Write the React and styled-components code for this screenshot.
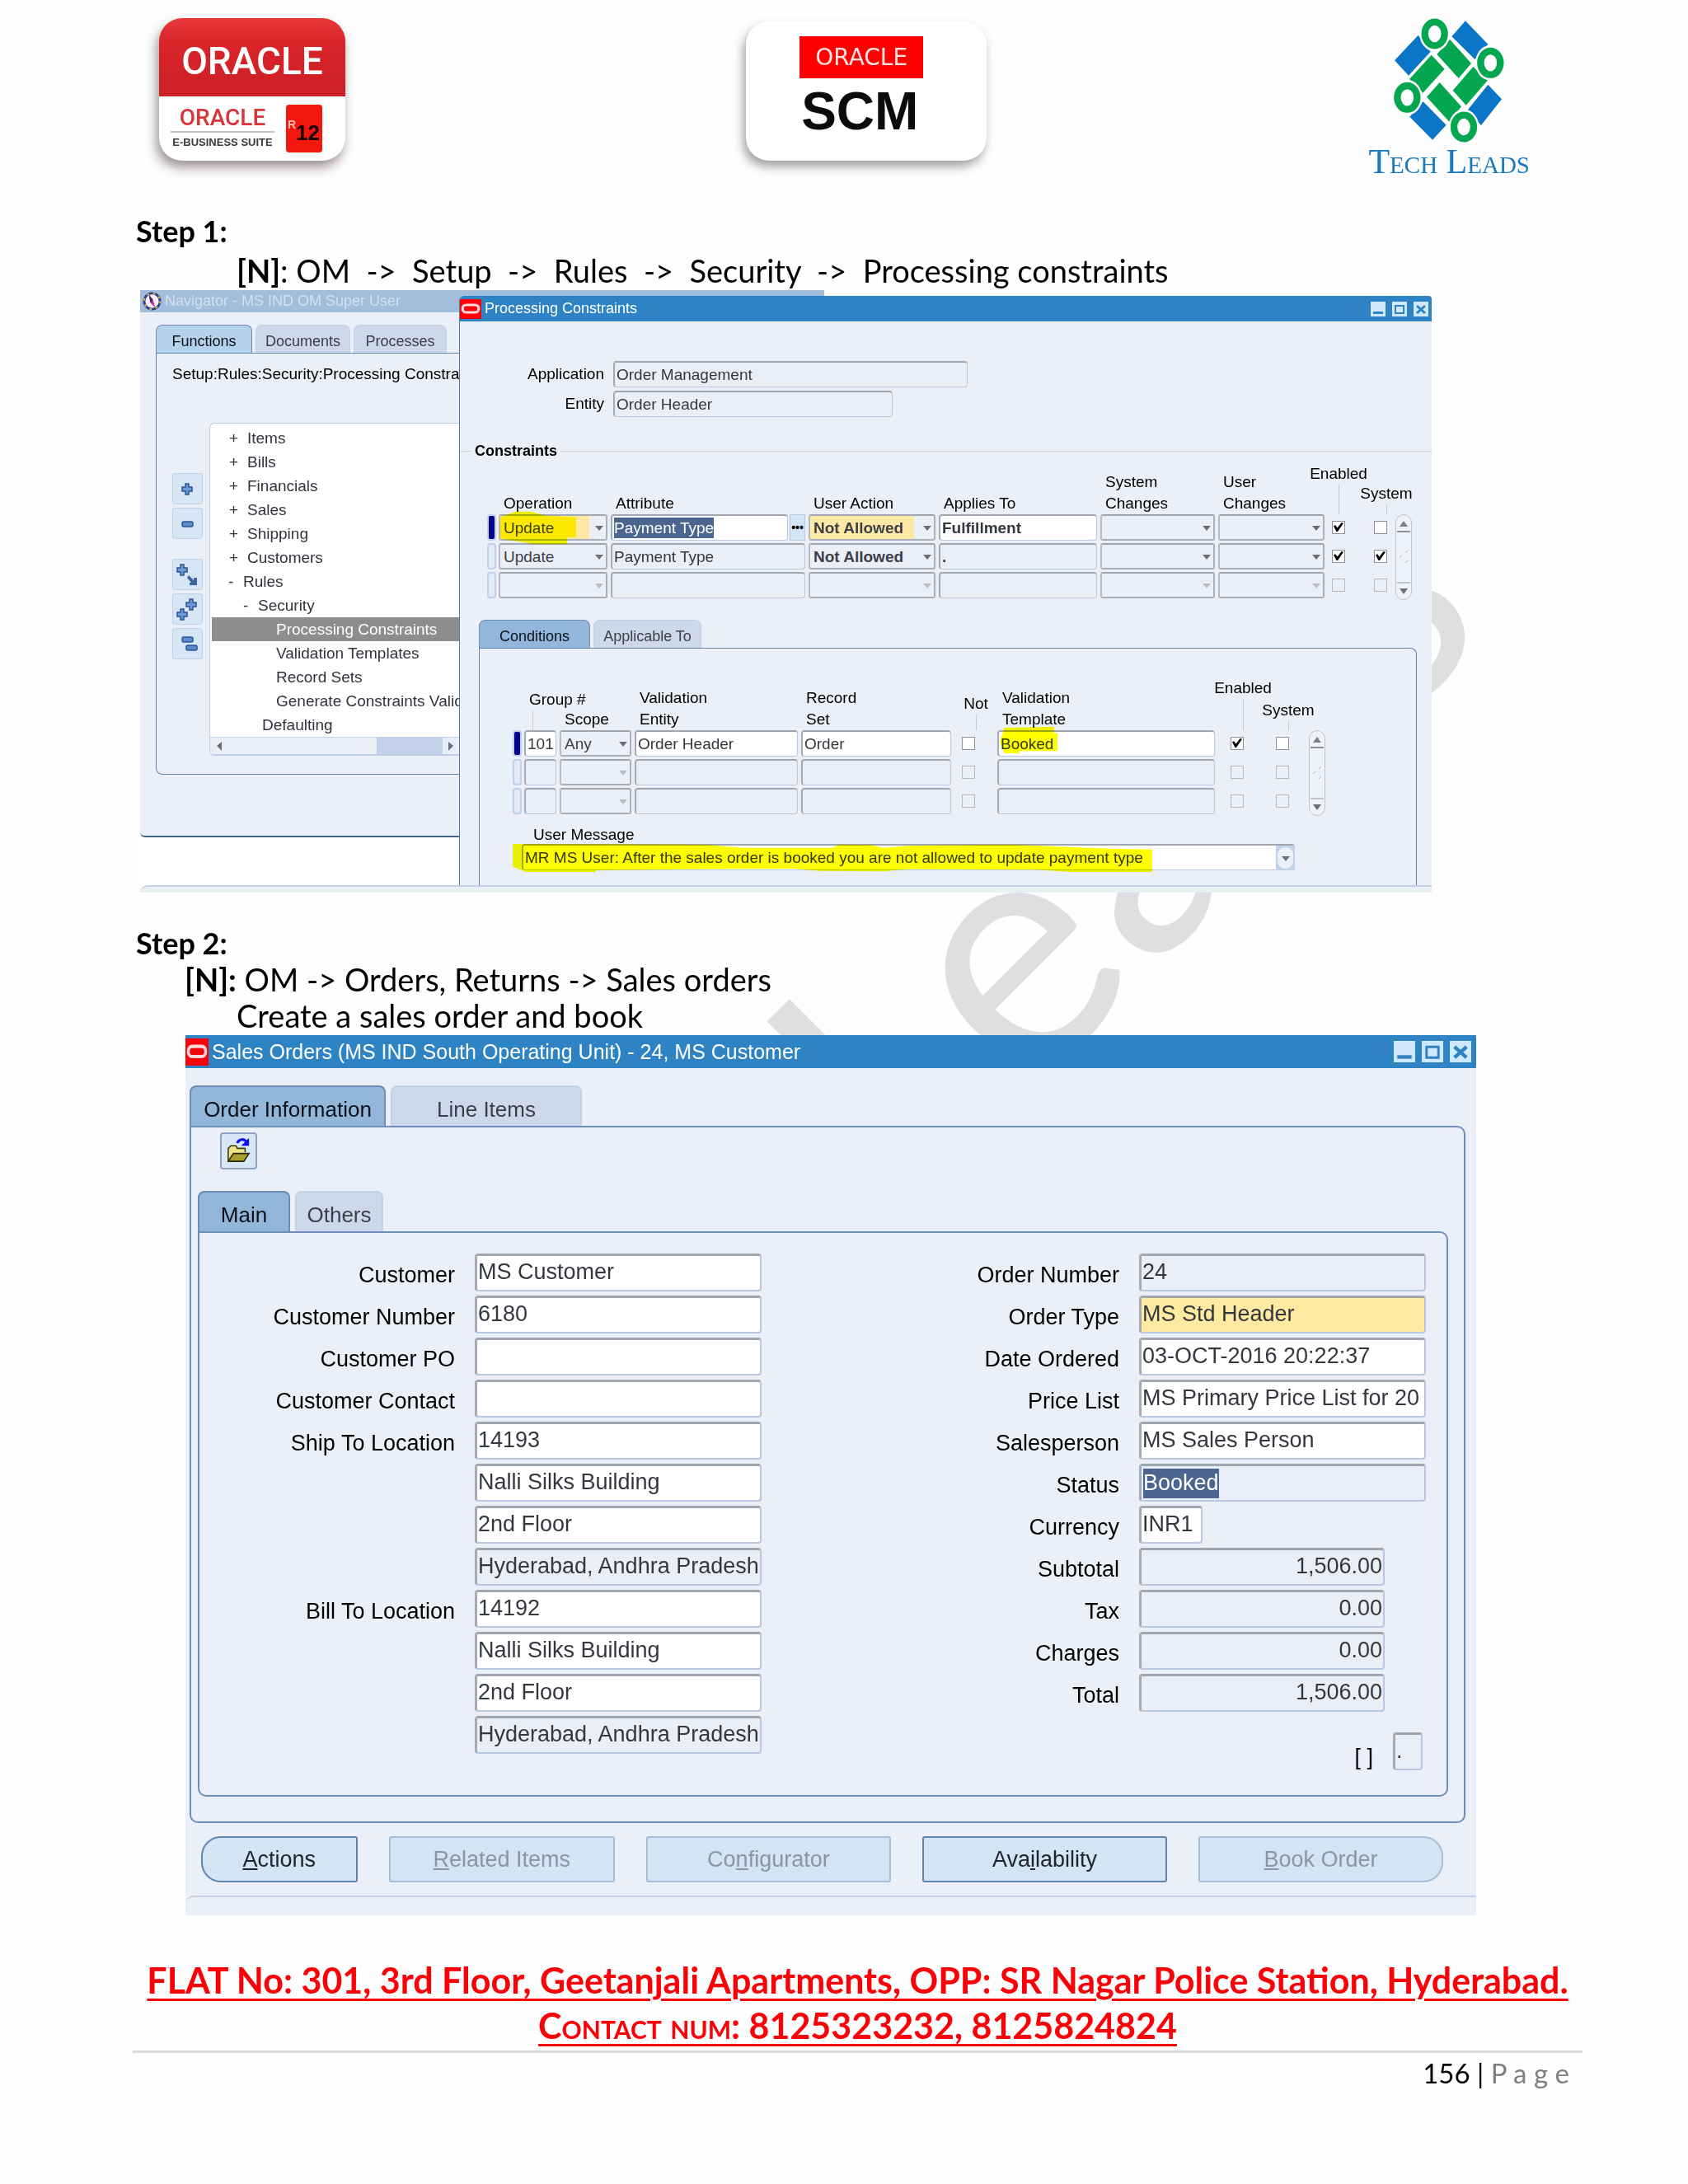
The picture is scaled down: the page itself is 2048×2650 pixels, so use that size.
import React from "react";
import styled, { createGlobalStyle } from "styled-components";

const GlobalStyle = createGlobalStyle`
    * {
        box-sizing: border-box;
    }
    body {
        margin: 0;
        background-color: #fefefe;
        color: #000000;
        font-family: "Liberation Sans", Arial, sans-serif;
    }
    input, select, button {
        margin: 0;
        font-family: inherit;
        font-size: inherit;
        color: inherit;
        border-radius: 0;
    }
`;

const Page = styled.div`
    position: relative;
    z-index: 0;
    min-height: 2650px;
    overflow: hidden;
`;

const Watermark = styled.div`
    position: absolute;
    left: 492px;
    top: 1747px;
    z-index: -1;
    transform: rotate(-45deg);
    transform-origin: left bottom;
    white-space: nowrap;
    font-family: Lato, sans-serif;
    font-size: 400px;
    line-height: 400px;
    color: #dfdfe2;
    user-select: none;
`;

const Header = styled.header`
    display: grid;
    grid-template-columns: 713fr 756fr 194fr;
    padding: 22px 192px 0 193px;
`;

const SuiteLogo = styled.div`
    width: 226px;
    height: 173px;
    border-radius: 28px;
    overflow: hidden;
    background-color: #ffffff;
    box-shadow: -3px 8px 14px rgba(60, 40, 40, 0.5);
`;

const SuiteTop = styled.div`
    height: 95px;
    padding-top: 8px;
    display: flex;
    align-items: center;
    justify-content: center;
    background: linear-gradient(#e8383c, #d9242a 30%, #cc1f26);
    color: #ffffff;
    font: 500 46px Roboto, sans-serif;
`;

const SuiteBottom = styled.div`
    display: flex;
    align-items: center;
    gap: 14px;
    height: 78px;
    padding-left: 14px;
`;

const SuiteName = styled.div`
    width: 126px;
    text-align: center;
    white-space: nowrap;
    color: #3a3a3a;
    font: bold 13px/24px "Liberation Sans", sans-serif;
`;

const SuiteBrand = styled.div`
    color: #d8343a;
    border-bottom: 2px solid #c4c4c4;
    font: 500 28px/32px Roboto, sans-serif;
`;

const Release = styled.div`
    width: 44px;
    height: 58px;
    border-radius: 4px;
    display: flex;
    align-items: flex-end;
    justify-content: flex-end;
    padding: 0 3px 10px 0;
    background-color: #f3170d;
    color: #1a0505;
    font: bold 26px/28px "Liberation Sans", sans-serif;
    & > small {
        align-self: center;
        font-size: 14px;
        color: #ffc0b0;
    }
`;

const ScmLogo = styled.div`
    width: 292px;
    height: 169px;
    margin-top: 4px;
    padding-top: 18px;
    border-radius: 28px;
    display: flex;
    flex-direction: column;
    align-items: center;
    background-color: #ffffff;
    box-shadow: -3px 7px 12px rgba(70, 70, 70, 0.5);
`;

const ScmBrand = styled.div`
    width: 150px;
    margin-right: 12px;
    text-align: center;
    background-color: #fe0000;
    color: #ffe4e4;
    font: 28px/51px "DejaVu Sans", sans-serif;
`;

const ScmName = styled.div`
    margin-right: 16px;
    color: #0c0c0c;
    font: bold 64px/80px "Liberation Sans", sans-serif;
`;

const TechLogo = styled.div`
    display: flex;
    flex-direction: column;
    align-items: center;
    white-space: nowrap;
    color: #1878bf;
    font: 42px/46px "Liberation Serif", serif;
    font-variant: small-caps;
`;

const Main = styled.main`
    padding: 37px 133px 0 165px;
`;

const Steps = styled.div`
    font-family: Lato, sans-serif;
    font-size: 38px;
    line-height: ${props => props.$tight ? "44px" : "48px"};
    padding: ${props => props.$tight ? "39px 0 2px" : "0"};
`;

const StepTitle = styled.h2`
    margin: 0;
    font-size: 36px;
    font-weight: 700;
`;

const StepLine = styled.p`
    margin: 0;
    padding-left: ${props => props.$near ? "59px" : "122px"};
    white-space: pre-wrap;
`;

/* Windows */

const Desktop = styled.section`
    display: grid;
    max-width: 1567px;
    margin-left: 5px;
    background-color: #ffffff;
    font-size: 19px;
`;

const Window = styled.div`
    background-color: #ebeff8;
`;

const NavigatorWindow = styled(Window)`
    grid-area: 1 / 1;
    align-self: start;
    width: 830px;
    padding-bottom: 74px;
    border-bottom: 2px solid #45628c;
    border-radius: 0 0 0 6px;
`;

const FrontWindow = styled(Window)`
    grid-area: 1 / 1;
    margin: 7px 0 0 387px;
    border-left: 1px solid #55799f;
    border-radius: 6px 4px 0 0;
    overflow: hidden;
`;

const SalesWindow = styled(Window)`
    max-width: 1566px;
    margin-left: 60px;
    font-size: 27px;
`;

const StatusStrip = styled.div`
    height: ${props => props.$tall ? "24px" : "9px"};
    border-top: 2px solid #c3cfe8;
    border-radius: 10px 0 0 0;
    background-color: ${props => props.$tall ? "#ebeff7" : "#e9f0f3"};
`;

const TitleBar = styled.div`
    display: flex;
    align-items: center;
    height: ${props => props.$big ? "40px" : "31px"};
    padding-right: ${props => props.$big ? "6px" : "4px"};
    gap: 4px;
    background-color: #2d83c4;
    color: #ffffff;
    font-size: ${props => props.$big ? "25px" : "18px"};
`;

const FadedTitleBar = styled(TitleBar)`
    height: 27px;
    padding-left: 3px;
    background-color: #a2bedb;
    color: #d3e1f0;
`;

const Title = styled.span`
    flex: 1;
    white-space: nowrap;
`;

const TitleButton = styled.button`
    width: ${props => props.$big ? "26px" : "18px"};
    height: ${props => props.$big ? "26px" : "18px"};
    padding: 0;
    border: 0;
    display: flex;
    background-color: #cfe8fb;
    & + & {
        margin-left: ${props => props.$big ? "4px" : "2px"};
    }
    & > svg {
        width: 100%;
        height: 100%;
    }
`;

const Tabs = styled.div`
    display: flex;
    gap: ${props => props.$big ? "6px" : "4px"};
    margin: ${props => props.$margin};
    font-size: ${props => props.$big ? "26px" : "18px"};
`;

const Tab = styled.button`
    width: ${props => props.$width};
    height: ${props => props.$big ? "49px" : "34px"};
    padding: ${props => props.$big ? "8px 0 0" : "5px 0 0"};
    border: solid ${props => props.$active ? "#6f8db3" : "#c3d0e5"};
    border-width: ${props => props.$big ? "2px 2px 0" : "1px 1px 0"};
    border-radius: 8px 8px 0 0;
    background-color: ${props => props.$active ? props.$soft ? "#b5d2ec" : "#93b7da" : "#cdd8eb"};
    color: ${props => props.$active ? "#0c1018" : "#3a3f48"};
    white-space: nowrap;
`;

const NavigatorPanel = styled.div`
    margin: 0 0 0 19px;
    padding: 14px 0 22px 19px;
    border: 1px solid #5f83ab;
    border-right: 0;
    border-radius: 0 0 0 8px;
`;

const NavigatorPath = styled.div`
    width: 348px;
    line-height: 22px;
    white-space: nowrap;
    overflow: hidden;
`;

const NavigatorBody = styled.div`
    display: flex;
    gap: 8px;
    padding-top: 48px;
`;

const Tools = styled.div`
    display: flex;
    flex-direction: column;
    gap: 4px;
    padding-top: 61px;
`;

const ToolButton = styled.button`
    width: 37px;
    height: 38px;
    padding: 0;
    border: 1px solid #bfd0e6;
    border-radius: 3px;
    background-color: #d6e6f5;
    &:nth-child(3) {
        margin-top: 20px;
    }
    & > svg {
        display: block;
        width: 35px;
        height: 36px;
    }
`;

const TreeBox = styled.div`
    width: 303px;
    padding-top: 3px;
    border: 1px solid #bccde4;
    border-right: 0;
    border-radius: 6px 0 0 6px;
    background-color: #ffffff;
    overflow: hidden;
`;

const Tree = styled.ul`
    margin: 0;
    padding: 0;
    list-style: none;
`;

const TreeItem = styled.li`
    display: flex;
    height: 29px;
    line-height: 29px;
    margin-left: 2px;
    padding-left: ${props => props.$indent};
    white-space: nowrap;
    color: ${props => props.$selected ? "#ffffff" : "#30343c"};
    background-color: ${props => props.$selected ? "#8e8d8e" : "transparent"};
`;

const TreeMark = styled.span`
    width: ${props => props.$wide ? "22px" : "18px"};
`;

const TreeScroll = styled.div`
    display: flex;
    align-items: center;
    height: 22px;
    background-color: #c3d0e9;
    & > svg {
        width: 20px;
        height: 20px;
        background-color: #e9eff8;
    }
    & > div {
        width: 182px;
        height: 20px;
        margin-right: auto;
        background-color: #ebf0f6;
    }
`;

/* Form parts */

const Field = styled.input`
    width: ${props => props.$width || "100%"};
    height: ${props => props.$big ? "46px" : "32px"};
    padding: ${props => props.$big ? "0 1px 2px" : "0 2px"};
    border: solid;
    border-width: ${props => props.$big ? "3px 2px 2px 3px" : "2px 1px 1px 2px"};
    border-color: #a0a6b0 #b8c7e2 #b8c7e2 #a4aab6;
    border-radius: 4px;
    background-color: ${props => props.$fill || "#ffffff"};
    color: #33373e;
    font-weight: ${props => props.$bold ? "bold" : "normal"};
    text-align: ${props => props.$right ? "right" : "left"};
    display: block;
`;

const FieldShell = styled.div`
    display: flex;
    align-items: center;
    width: 100%;
    height: ${props => props.$big ? "46px" : "32px"};
    padding-left: 2px;
    border: solid;
    border-width: ${props => props.$big ? "3px 2px 2px 3px" : "2px 1px 1px 2px"};
    border-color: #a0a6b0 #b8c7e2 #b8c7e2 #a4aab6;
    border-radius: 4px;
    background-color: ${props => props.$fill || "#ffffff"};
`;

const SelectedInput = styled.input`
    field-sizing: content;
    padding: 0;
    border: 0;
    background-color: #4a6690;
    color: #ffffff;
    height: ${props => props.$big ? "36px" : "25px"};
`;

const LovCell = styled.div`
    display: flex;
    gap: 2px;
`;

const LovButton = styled.button`
    flex: none;
    width: 19px;
    height: 32px;
    padding: 0;
    border: 1px solid #b6cbe3;
    background-color: #d3e4f5;
    font-weight: bold;
    line-height: 20px;
    font-size: 14px;
`;

const SelectWrap = styled.div`
    position: relative;
    &::after {
        content: "";
        position: absolute;
        right: 5px;
        top: 14px;
        border: 5px solid transparent;
        border-top: 6px solid ${props => props.$off ? "#b9bcc4" : "#6b6e7b"};
        border-bottom: 0;
        pointer-events: none;
    }
`;

const Select = styled.select`
    appearance: none;
    display: block;
    width: 100%;
    height: 32px;
    padding: 0 16px 0 4px;
    border: 2px solid;
    border-color: #a0a6b0 #aab0bb #a9afba #b4bac6;
    border-radius: 3px;
    background: ${props => props.$required ? "linear-gradient(90deg, #fde9a4 84%, #ebeff6 84%)" : "#ebeff7"};
    color: #3a3f48;
    font-weight: ${props => props.$bold ? "bold" : "normal"};
    opacity: 1;
`;

const Check = styled.input`
    appearance: none;
    display: inline-block;
    vertical-align: top;
    width: 16px;
    height: 16px;
    margin-top: 8px;
    border: 1px solid ${props => props.disabled ? "#b5b9c2" : "#8d919b"};
    background-color: ${props => props.disabled ? "#ebeff7" : "#ffffff"};
    &:checked::after {
        content: "";
        display: block;
        width: 12px;
        height: 11px;
        margin: 1px;
        background-color: #000000;
        clip-path: polygon(0 38%, 18% 30%, 38% 58%, 80% 0, 100% 6%, 42% 100%, 28% 100%);
    }
`;

const Marker = styled.div`
    width: 11px;
    height: 32px;
    border: 2px solid #bfd0ea;
    border-radius: 4px;
    background-color: ${props => props.$current ? "#00008b" : "#e2ecf8"};
`;

const Highlight = styled.div`
    position: absolute;
    z-index: 1;
    left: ${props => props.$left};
    top: ${props => props.$top};
    width: ${props => props.$width};
    height: ${props => props.$height};
    clip-path: polygon(${props => props.$shape});
    background-color: #ffff00;
    mix-blend-mode: multiply;
    pointer-events: none;
`;

const Marked = styled.div`
    position: relative;
`;

const ContextForm = styled.div`
    display: grid;
    grid-template-columns: 175px 1fr;
    align-items: center;
    gap: 4px 11px;
    padding: 48px 0 0;
    & > label {
        text-align: right;
    }
`;

const Divider = styled.h3`
    display: flex;
    align-items: center;
    gap: 4px;
    margin: 30px 0 3px;
    font-size: 18px;
    line-height: 22px;
    &::before, &::after {
        content: "";
        height: 1px;
        background-color: #c8cfdf;
    }
    &::before {
        width: 14px;
    }
    &::after {
        flex: 1;
    }
`;

const Grid = styled.table`
    width: 100%;
    table-layout: fixed;
    border-collapse: collapse;
    & th {
        height: ${props => props.$head};
        padding: 0 0 0 6px;
        vertical-align: bottom;
        text-align: left;
        font-weight: normal;
        line-height: 26px;
        white-space: nowrap;
    }
    & td {
        height: 35px;
        padding: 0 4px 0 0;
        vertical-align: top;
    }
    & td.check, & th.check {
        padding: 0;
        text-align: center;
    }
    & td.end {
        padding: 0;
    }
    & td.shift, & th.shift {
        padding-right: ${props => props.$shift};
    }
`;

const Pointer = styled.div`
    display: flex;
    flex-direction: column;
    align-items: ${props => props.$left ? "flex-start" : "center"};
    margin-right: ${props => props.$lean ? "-14px" : "0"};
    &::after {
        content: "";
        width: 1px;
        height: ${props => props.$drop};
        margin-left: ${props => props.$left ? "4px" : "0"};
        background-color: #bccbe4;
    }
`;

const RowScroll = styled.div`
    display: flex;
    flex-direction: column;
    justify-content: space-between;
    width: 20px;
    height: 104px;
    margin-left: auto;
    border: 1px solid #b9c4d8;
    border-radius: 10px;
    background-color: #eef2f9;
    & > svg {
        display: block;
        width: 18px;
    }
`;

const ConstraintsArea = styled.div`
    padding: 0 24px 0 33px;
`;

const ConditionsPanel = styled.div`
    margin: 0 18px 0 23px;
    padding: 34px 110px 18px 40px;
    border: 1px solid #5f83ab;
    border-bottom: 0;
    border-radius: 0 8px 0 0;
`;

const MessageLabel = styled.label`
    display: block;
    margin-top: 11px;
    padding-left: 25px;
    line-height: 22px;
`;

const MessageRow = styled.div`
    position: relative;
    margin: 0 37px 0 11px;
`;

const MessageButton = styled.button`
    position: absolute;
    right: 0;
    top: 2px;
    width: 23px;
    height: 30px;
    padding: 2px;
    border: 0;
    background-color: #c1d2e9;
    & > svg {
        display: block;
        width: 19px;
        height: 26px;
        border-radius: 9px;
        background-color: #eaf1f9;
    }
`;

const OrderPanel = styled.div`
    margin: 0 13px 16px 5px;
    padding: 6px 19px 30px 8px;
    border: 2px solid #6f8fb6;
    border-radius: 0 10px 10px 10px;
`;

const MainPanel = styled.div`
    display: flex;
    justify-content: space-between;
    padding: 25px 25px 30px 0;
    border: 2px solid #6f8fb6;
    border-radius: 0 10px 10px 10px;
`;

const OpenButton = styled.button`
    display: block;
    width: 45px;
    height: 45px;
    margin-left: 27px;
    padding: 0;
    border: 2px solid #8ea4c2;
    border-radius: 4px;
    background-color: #d8e7f6;
    & > svg {
        display: block;
        width: 41px;
        height: 41px;
    }
`;

const OrderColumn = styled.div`
    display: flex;
    flex-direction: column;
    gap: 5px;
`;

const OrderRow = styled.div`
    display: grid;
    grid-template-columns: 310px 348px;
    gap: 24px;
    & > label {
        padding-top: 6px;
        text-align: right;
        line-height: 40px;
        white-space: nowrap;
    }
`;

const FlexRow = styled.div`
    display: flex;
    align-items: center;
    justify-content: flex-end;
    gap: 24px;
    margin-top: 20px;
    padding-right: 4px;
    & > label {
        padding-top: 14px;
        line-height: 32px;
    }
`;

const Actions = styled.div`
    display: flex;
    gap: 38px;
    padding: 0 40px 16px 19px;
`;

const ActionButton = styled.button`
    flex: ${props => props.$grow} 1 0;
    height: 56px;
    padding: 0;
    border: 2px solid ${props => props.disabled ? "#a9bdd6" : "#6384ae"};
    border-radius: ${props => props.$round || "3px"};
    background-color: #d3e4f4;
    color: ${props => props.disabled ? "#8b95a3" : "#20242c"};
`;

/* Footer */

const Footer = styled.footer`
    padding: 51px 128px 0 161px;
    text-align: center;
    font-family: Lato, sans-serif;
`;

const Address = styled.div`
    color: #fb0007;
    font-size: 43px;
    font-weight: 700;
    line-height: 55px;
    text-decoration: underline;
    text-decoration-thickness: 3px;
    text-underline-offset: 6px;
    white-space: nowrap;
    & > span {
        font-variant: small-caps;
    }
`;

const PageNumber = styled.div`
    margin-top: 3px;
    padding: 4px 16px 0 0;
    border-top: 3px solid #d8d8d8;
    text-align: right;
    font-size: 33px;
    line-height: 40px;
    & > span {
        color: #7f7f7f;
    }
`;

const muted = "#eaeff5";

const TREE = [
    { mark: "+", name: "Items", indent: "21px" },
    { mark: "+", name: "Bills", indent: "21px" },
    { mark: "+", name: "Financials", indent: "21px" },
    { mark: "+", name: "Sales", indent: "21px" },
    { mark: "+", name: "Shipping", indent: "21px" },
    { mark: "+", name: "Customers", indent: "21px" },
    { mark: "-", name: "Rules", indent: "20px" },
    { mark: "-", name: "Security", indent: "38px" },
    { name: "Processing Constraints", indent: "78px", selected: true },
    { name: "Validation Templates", indent: "78px" },
    { name: "Record Sets", indent: "78px" },
    { name: "Generate Constraints Valid", indent: "78px" },
    { name: "Defaulting", indent: "61px" }
];

const CONSTRAINTS = [
    { operation: "Update", attribute: "Payment Type", action: "Not Allowed", applies: "Fulfillment", enabled: true, system: false, current: true },
    { operation: "Update", attribute: "Payment Type", action: "Not Allowed", applies: ".", enabled: true, system: true },
    { operation: "", attribute: "", action: "", applies: "", empty: true }
];

const CONDITIONS = [
    { group: "101", scope: "Any", entity: "Order Header", set: "Order", template: "Booked", enabled: true, current: true },
    { group: "", scope: "", entity: "", set: "", template: "", empty: true },
    { group: "", scope: "", entity: "", set: "", template: "", empty: true }
];

const LEFT_FIELDS = [
    { label: "Customer", value: "MS Customer" },
    { label: "Customer Number", value: "6180" },
    { label: "Customer PO", value: "" },
    { label: "Customer Contact", value: "" },
    { label: "Ship To Location", value: "14193" },
    { hidden: "Ship To Address 1", value: "Nalli Silks Building" },
    { hidden: "Ship To Address 2", value: "2nd Floor" },
    { hidden: "Ship To City", value: "Hyderabad, Andhra Pradesh", fill: muted },
    { label: "Bill To Location", value: "14192" },
    { hidden: "Bill To Address 1", value: "Nalli Silks Building" },
    { hidden: "Bill To Address 2", value: "2nd Floor" },
    { hidden: "Bill To City", value: "Hyderabad, Andhra Pradesh", fill: muted }
];

const RIGHT_FIELDS = [
    { label: "Order Number", value: "24", fill: muted },
    { label: "Order Type", value: "MS Std Header", fill: "#ffeaa2" },
    { label: "Date Ordered", value: "03-OCT-2016 20:22:37" },
    { label: "Price List", value: "MS Primary Price List for 20" },
    { label: "Salesperson", value: "MS Sales Person" },
    { label: "Status", value: "Booked", fill: "#e9eef9", selected: true },
    { label: "Currency", value: "INR1", width: "77px" },
    { label: "Subtotal", value: "1,506.00", fill: muted, width: "298px", right: true },
    { label: "Tax", value: "0.00", fill: muted, width: "298px", right: true },
    { label: "Charges", value: "0.00", fill: muted, width: "298px", right: true },
    { label: "Total", value: "1,506.00", fill: muted, width: "298px", right: true }
];

const RINGS = [[425, 120], [628, 226], [325, 352], [531, 459]];

const TechMark = () => (
    <svg width="134" height="151" viewBox="276 63 402 453" aria-hidden="true">
        <g fill="#0b76c8">
            <polygon points="279,217 365,125 410,185 330,272" />
            <polygon points="537,73 619,158 571,213 487,130" />
            <polygon points="334,422 383,367 467,452 417,506" />
            <polygon points="619,305 669,358 594,453 543,400" />
        </g>
        <g fill="#04a650">
            <polygon points="413,197 461,248 382,335 333,285" />
            <polygon points="480,140 558,228 512,282 433,195" />
            <polygon points="565,240 617,290 539,380 491,326" />
            <polygon points="443,297 522,385 478,440 396,350" />
        </g>
        {RINGS.map(([x, y]) => (
            <g key={x}>
                <ellipse cx={x} cy={y} rx="55" ry="64" fill="#fefefe" />
                <ellipse cx={x} cy={y} rx="36" ry="43" fill="none" stroke="#04a650" strokeWidth="25" />
            </g>
        ))}
    </svg>
);

const OracleIcon = ({ width, height }) => (
    <svg width={width} height={height} viewBox="0 0 24 24" preserveAspectRatio="none" aria-hidden="true">
        <rect width="24" height="24" fill="#fb0007" />
        <rect x="3" y="7" width="18" height="9" rx="4" fill="none" stroke="#ffd9d9" strokeWidth="3" />
    </svg>
);

const NavigatorIcon = () => (
    <svg width="23" height="23" viewBox="0 0 24 24" aria-hidden="true">
        <circle cx="12" cy="12" r="10" fill="#f3eef8" stroke="#2f3e86" strokeWidth="3" />
        <circle cx="12" cy="12" r="10" fill="none" stroke="#d7b64f" strokeWidth="2" strokeDasharray="3 5" />
        <path d="M8 4l5 6 3 10-6-6z" fill="#c22a8c" />
        <path d="M8 4l5 6-3 4z" fill="#3b2c78" />
    </svg>
);

const WindowButtons = ({ big }) => (
    <>
        <TitleButton $big={big} aria-label="Minimize">
            <svg viewBox="0 0 18 18"><rect x="3" y="12" width="12" height="3" fill="#2d83c4" /></svg>
        </TitleButton>
        <TitleButton $big={big} aria-label="Maximize">
            <svg viewBox="0 0 18 18"><path d="M4 5h10v9H4z" fill="none" stroke="#2d83c4" strokeWidth="2" /></svg>
        </TitleButton>
        <TitleButton $big={big} aria-label="Close">
            <svg viewBox="0 0 18 18"><path d="M4 5l10 9M14 5L4 14" stroke="#2d83c4" strokeWidth="3" /></svg>
        </TitleButton>
    </>
);

const Plus = ({ x, y }) => (
    <path transform={`translate(${x} ${y})`} d="M5 1h4v4h4v5h-4v4h-4v-4h-4v-5h4z" fill="#6c9ad6" stroke="#2d5590" strokeWidth="1.500" />
);

const Minus = ({ x, y }) => (
    <rect x={x} y={y} width="13" height="6" rx="2" fill="#5c8bcb" stroke="#2d5590" strokeWidth="1.500" />
);

const TOOLS = [
    { label: "Expand", icon: <Plus x={10} y={11} /> },
    { label: "Collapse", icon: <Minus x={11} y={16} /> },
    { label: "Expand Branch", icon: <><Plus x={4} y={5} /><path d="M19 19l6 6v-3h4v9h-9v-3h2l-5-6z" fill="#3c689f" /></> },
    { label: "Expand All", icon: <><Plus x={15} y={5} /><Plus x={4} y={17} /></> },
    { label: "Collapse All", icon: <><Minus x={11} y={10} /><Minus x={16} y={20} /></> }
];

const ScrollBar = () => (
    <RowScroll>
        <svg viewBox="0 0 18 21"><path d="M4 14l5-7 5 7z" fill="#7b7f8b" /><path d="M1 20h16" stroke="#8a8f9d" strokeWidth="2" /></svg>
        <svg viewBox="0 0 18 18"><path d="M4 10l3-3M11 4l3-3M11 16l3-3" stroke="#a9afbd" /></svg>
        <svg viewBox="0 0 18 21"><path d="M4 8l5 7 5-7z" fill="#6b6e7b" /><path d="M1 1h16" stroke="#8a9bb8" strokeWidth="1" /></svg>
    </RowScroll>
);

function DropDown({ label, value, ...rest }) {
    return (
        <SelectWrap $off={rest.disabled}>
            <Select aria-label={label} defaultValue={value} {...rest}>
                <option value={value}>{value}</option>
            </Select>
        </SelectWrap>
    );
}

function NavigatorPane() {
    return (
        <NavigatorWindow>
            <FadedTitleBar>
                <NavigatorIcon />
                <Title>Navigator - MS IND OM Super User</Title>
            </FadedTitleBar>
            <Tabs $margin="15px 0 0 19px">
                <Tab $active $soft $width="117px">Functions</Tab>
                <Tab $width="115px">Documents</Tab>
                <Tab $width="113px">Processes</Tab>
            </Tabs>
            <NavigatorPanel>
                <NavigatorPath>Setup:Rules:Security:Processing Constra</NavigatorPath>
                <NavigatorBody>
                    <Tools>
                        {TOOLS.map(tool => (
                            <ToolButton key={tool.label} aria-label={tool.label}>
                                <svg viewBox="0 0 35 36">{tool.icon}</svg>
                            </ToolButton>
                        ))}
                    </Tools>
                    <TreeBox>
                        <Tree>
                            {TREE.map(item => (
                                <TreeItem key={item.name} $indent={item.indent} $selected={item.selected}>
                                    {item.mark ? <TreeMark $wide={item.mark === "+"}>{item.mark}</TreeMark> : null}
                                    {item.name}
                                </TreeItem>
                            ))}
                        </Tree>
                        <TreeScroll>
                            <svg viewBox="0 0 20 20"><path d="M14 5v11l-6-6z" fill="#6b6e7b" /></svg>
                            <div />
                            <svg viewBox="0 0 20 20"><path d="M7 5v11l6-6z" fill="#6b6e7b" /></svg>
                        </TreeScroll>
                    </TreeBox>
                </NavigatorBody>
            </NavigatorPanel>
        </NavigatorWindow>
    );
}

function ConstraintsTable() {
    return (
        <Grid $head="63px" $shift="26px">
            <colgroup>
                <col width="14" /><col width="136" /><col width="240" /><col width="158" /><col /><col width="143" />
                <col width="133" /><col width="52" /><col width="24" /><col width="26" />
            </colgroup>
            <thead>
                <tr>
                    <th />
                    <th>Operation</th>
                    <th>Attribute</th>
                    <th>User Action</th>
                    <th>Applies To</th>
                    <th>System<br />Changes</th>
                    <th>User<br />Changes</th>
                    <th className="check shift"><Pointer $drop="36px">Enabled</Pointer></th>
                    <th className="check"><Pointer $lean $drop="12px">System</Pointer></th>
                    <th />
                </tr>
            </thead>
            <tbody>
                {CONSTRAINTS.map((row, index) => (
                    <tr key={index}>
                        <td><Marker $current={row.current} /></td>
                        <td>
                            <Marked>
                                <DropDown label="Operation" value={row.operation} $required={row.current} disabled={row.empty} />
                                {row.current ? (
                                    <Highlight $left="2px" $top="-5px" $width="92px" $height="42px" $shape="0 20%, 20% 4%, 40% 4%, 60% 16%, 100% 20%, 100% 78%, 88% 78%, 88% 98%, 45% 98%, 0 82%" />
                                ) : null}
                            </Marked>
                        </td>
                        <td>
                            {row.current ? (
                                <LovCell>
                                    <FieldShell><SelectedInput aria-label="Attribute" defaultValue={row.attribute} /></FieldShell>
                                    <LovButton aria-label="List of values">•••</LovButton>
                                </LovCell>
                            ) : (
                                <Field aria-label="Attribute" defaultValue={row.attribute} $fill={muted} />
                            )}
                        </td>
                        <td><DropDown label="User Action" value={row.action} $bold $required={row.current} disabled={row.empty} /></td>
                        <td><Field aria-label="Applies To" defaultValue={row.applies} $bold $fill={row.current ? "#ffffff" : muted} /></td>
                        <td><DropDown label="System Changes" value="" disabled={row.empty} /></td>
                        <td><DropDown label="User Changes" value="" disabled={row.empty} /></td>
                        <td className="check shift"><Check type="checkbox" aria-label="Enabled" defaultChecked={row.enabled} disabled={row.empty} /></td>
                        <td className="check"><Check type="checkbox" aria-label="System" defaultChecked={row.system} disabled={row.empty} /></td>
                        {index === 0 ? <td className="end" rowSpan={3}><ScrollBar /></td> : null}
                    </tr>
                ))}
            </tbody>
        </Grid>
    );
}

function ConditionsTable() {
    return (
        <Grid $head="65px" $shift="18px">
            <colgroup>
                <col width="14" /><col width="43" /><col width="91" /><col width="202" /><col width="186" /><col width="52" />
                <col /><col width="46" /><col width="64" /><col width="20" />
            </colgroup>
            <thead>
                <tr>
                    <th />
                    <th><Pointer $left $drop="24px">Group #</Pointer></th>
                    <th>Scope</th>
                    <th>Validation<br />Entity</th>
                    <th>Record<br />Set</th>
                    <th className="check"><Pointer $drop="19px">Not</Pointer></th>
                    <th>Validation<br />Template</th>
                    <th className="check"><Pointer $lean $drop="38px">Enabled</Pointer></th>
                    <th className="check"><Pointer $lean $drop="11px">System</Pointer></th>
                    <th />
                </tr>
            </thead>
            <tbody>
                {CONDITIONS.map((row, index) => {
                    const fill = row.empty ? "#e9eef7" : "#ffffff";
                    return (
                        <tr key={index}>
                            <td><Marker $current={row.current} /></td>
                            <td><Field aria-label="Group #" defaultValue={row.group} $fill={fill} /></td>
                            <td><DropDown label="Scope" value={row.scope} disabled={row.empty} /></td>
                            <td><Field aria-label="Validation Entity" defaultValue={row.entity} $fill={fill} /></td>
                            <td><Field aria-label="Record Set" defaultValue={row.set} $fill={fill} /></td>
                            <td className="check shift"><Check type="checkbox" aria-label="Not" disabled={row.empty} /></td>
                            <td>
                                <Marked>
                                    <Field aria-label="Validation Template" defaultValue={row.template} $fill={fill} />
                                    {row.current ? (
                                        <Highlight $left="3px" $top="-5px" $width="70px" $height="33px" $shape="8% 6%, 94% 2%, 94% 26%, 100% 26%, 100% 92%, 34% 92%, 34% 100%, 8% 100%, 0 60%" />
                                    ) : null}
                                </Marked>
                            </td>
                            <td className="check"><Check type="checkbox" aria-label="Enabled" defaultChecked={row.enabled} disabled={row.empty} /></td>
                            <td className="check"><Check type="checkbox" aria-label="System" disabled={row.empty} /></td>
                            {index === 0 ? <td className="end" rowSpan={3}><ScrollBar /></td> : null}
                        </tr>
                    );
                })}
            </tbody>
        </Grid>
    );
}

function ConstraintsPane() {
    return (
        <FrontWindow>
            <TitleBar>
                <OracleIcon width="26" height="24" />
                <Title>Processing Constraints</Title>
                <WindowButtons />
            </TitleBar>
            <ContextForm>
                <label htmlFor="application">Application</label>
                <Field id="application" defaultValue="Order Management" $width="430px" $fill={muted} />
                <label htmlFor="entity">Entity</label>
                <Field id="entity" defaultValue="Order Header" $width="339px" $fill={muted} />
            </ContextForm>
            <Divider>Constraints</Divider>
            <ConstraintsArea><ConstraintsTable /></ConstraintsArea>
            <Tabs $margin="23px 0 0 23px">
                <Tab $active $width="135px">Conditions</Tab>
                <Tab $width="131px">Applicable To</Tab>
            </Tabs>
            <ConditionsPanel>
                <ConditionsTable />
                <MessageLabel htmlFor="message">User Message</MessageLabel>
                <MessageRow>
                    <Field id="message" defaultValue="MR MS User: After the sales order is booked you are not allowed to update payment type" />
                    <MessageButton aria-label="Edit message">
                        <svg viewBox="0 0 19 26"><path d="M5 11l5 6 5-6z" fill="#6b6e7b" /></svg>
                    </MessageButton>
                    <Highlight $left="-11px" $top="0" $width="776px" $height="34px" $shape="0 0, 30% 2%, 36% 14%, 50% 14%, 51% 2%, 56% 4%, 58% 14%, 62% 6%, 78% 2%, 92% 16%, 100% 20%, 100% 100%, 87% 100%, 82% 92%, 62% 90%, 58% 98%, 48% 96%, 44% 88%, 30% 90%, 13% 94%, 13% 100%, 2% 100%, 0 80%" />
                </MessageRow>
            </ConditionsPanel>
        </FrontWindow>
    );
}

function OrderField({ field, id }) {
    return (
        <OrderRow>
            {field.label ? <label htmlFor={id}>{field.label}</label> : <span />}
            {field.selected ? (
                <FieldShell $big $fill={field.fill}>
                    <SelectedInput id={id} $big defaultValue={field.value} />
                </FieldShell>
            ) : (
                <Field id={id} $big aria-label={field.hidden} defaultValue={field.value} $fill={field.fill} $width={field.width} $right={field.right} />
            )}
        </OrderRow>
    );
}

function SalesPane() {
    return (
        <SalesWindow>
            <TitleBar $big>
                <OracleIcon width="28" height="33" />
                <Title>Sales Orders (MS IND South Operating Unit) - 24, MS Customer</Title>
                <WindowButtons big />
            </TitleBar>
            <Tabs $big $margin="21px 0 0 5px">
                <Tab $big $active $width="238px">Order Information</Tab>
                <Tab $big $width="232px">Line Items</Tab>
            </Tabs>
            <OrderPanel>
                <OpenButton aria-label="Open folder">
                    <svg viewBox="0 0 26 26">
                        <path d="M5 21V11l2-2h4l1 2h6v3" fill="#e9e48a" stroke="#3d3a10" />
                        <path d="M5 21l4-6h12l-4 6z" fill="#a8a02c" stroke="#2c2908" />
                        <path d="M12 7c1-3 5-4 7-1" fill="none" stroke="#0a12e8" strokeWidth="2" />
                        <path d="M21 3v6h-6z" fill="#0a12e8" />
                    </svg>
                </OpenButton>
                <Tabs $big $margin="26px 0 0 0">
                    <Tab $big $active $width="112px">Main</Tab>
                    <Tab $big $width="107px">Others</Tab>
                </Tabs>
                <MainPanel>
                    <OrderColumn>
                        {LEFT_FIELDS.map((field, index) => <OrderField key={index} field={field} id={`left-${index}`} />)}
                    </OrderColumn>
                    <OrderColumn>
                        {RIGHT_FIELDS.map((field, index) => <OrderField key={index} field={field} id={`right-${index}`} />)}
                        <FlexRow>
                            <label htmlFor="flexfield">[ ]</label>
                            <Field id="flexfield" $big defaultValue="." $width="36px" $fill={muted} />
                        </FlexRow>
                    </OrderColumn>
                </MainPanel>
            </OrderPanel>
            <Actions>
                <ActionButton $grow={188} $round="24px 3px 3px 24px"><u>A</u>ctions</ActionButton>
                <ActionButton $grow={274} disabled><u>R</u>elated Items</ActionButton>
                <ActionButton $grow={297} disabled>Co<u>n</u>figurator</ActionButton>
                <ActionButton $grow={297}>Ava<u>i</u>lability</ActionButton>
                <ActionButton $grow={297} $round="3px 24px 24px 3px" disabled><u>B</u>ook Order</ActionButton>
            </Actions>
            <StatusStrip $tall />
        </SalesWindow>
    );
}

function App() {
    return (
        <Page>
            <GlobalStyle />
            <Watermark aria-hidden="true">Tech Leads</Watermark>
            <Header>
                <SuiteLogo>
                    <SuiteTop>ORACLE</SuiteTop>
                    <SuiteBottom>
                        <SuiteName>
                            <SuiteBrand>ORACLE</SuiteBrand>
                            E-BUSINESS SUITE
                        </SuiteName>
                        <Release><small>R</small>12</Release>
                    </SuiteBottom>
                </SuiteLogo>
                <ScmLogo>
                    <ScmBrand>ORACLE</ScmBrand>
                    <ScmName>SCM</ScmName>
                </ScmLogo>
                <TechLogo>
                    <TechMark />
                    Tech Leads
                </TechLogo>
            </Header>
            <Main>
                <Steps>
                    <StepTitle>Step 1:</StepTitle>
                    <StepLine><b>[N]</b>: {"OM  ->  Setup  ->  Rules  ->  Security  ->  Processing constraints"}</StepLine>
                </Steps>
                <Desktop>
                    <NavigatorPane />
                    <ConstraintsPane />
                    <StatusStrip />
                </Desktop>
                <Steps $tight>
                    <StepTitle>Step 2:</StepTitle>
                    <StepLine $near><b>[N]:</b> OM -&gt; Orders, Returns -&gt; Sales orders</StepLine>
                    <StepLine>Create a sales order and book</StepLine>
                </Steps>
                <SalesPane />
            </Main>
            <Footer>
                <Address>FLAT No: 301, 3rd Floor, Geetanjali Apartments, OPP: SR Nagar Police Station, Hyderabad.</Address>
                <Address><span>Contact num</span>: 8125323232, 8125824824</Address>
                <PageNumber>156 | <span>P a g e</span></PageNumber>
            </Footer>
        </Page>
    );
}

export default App;
